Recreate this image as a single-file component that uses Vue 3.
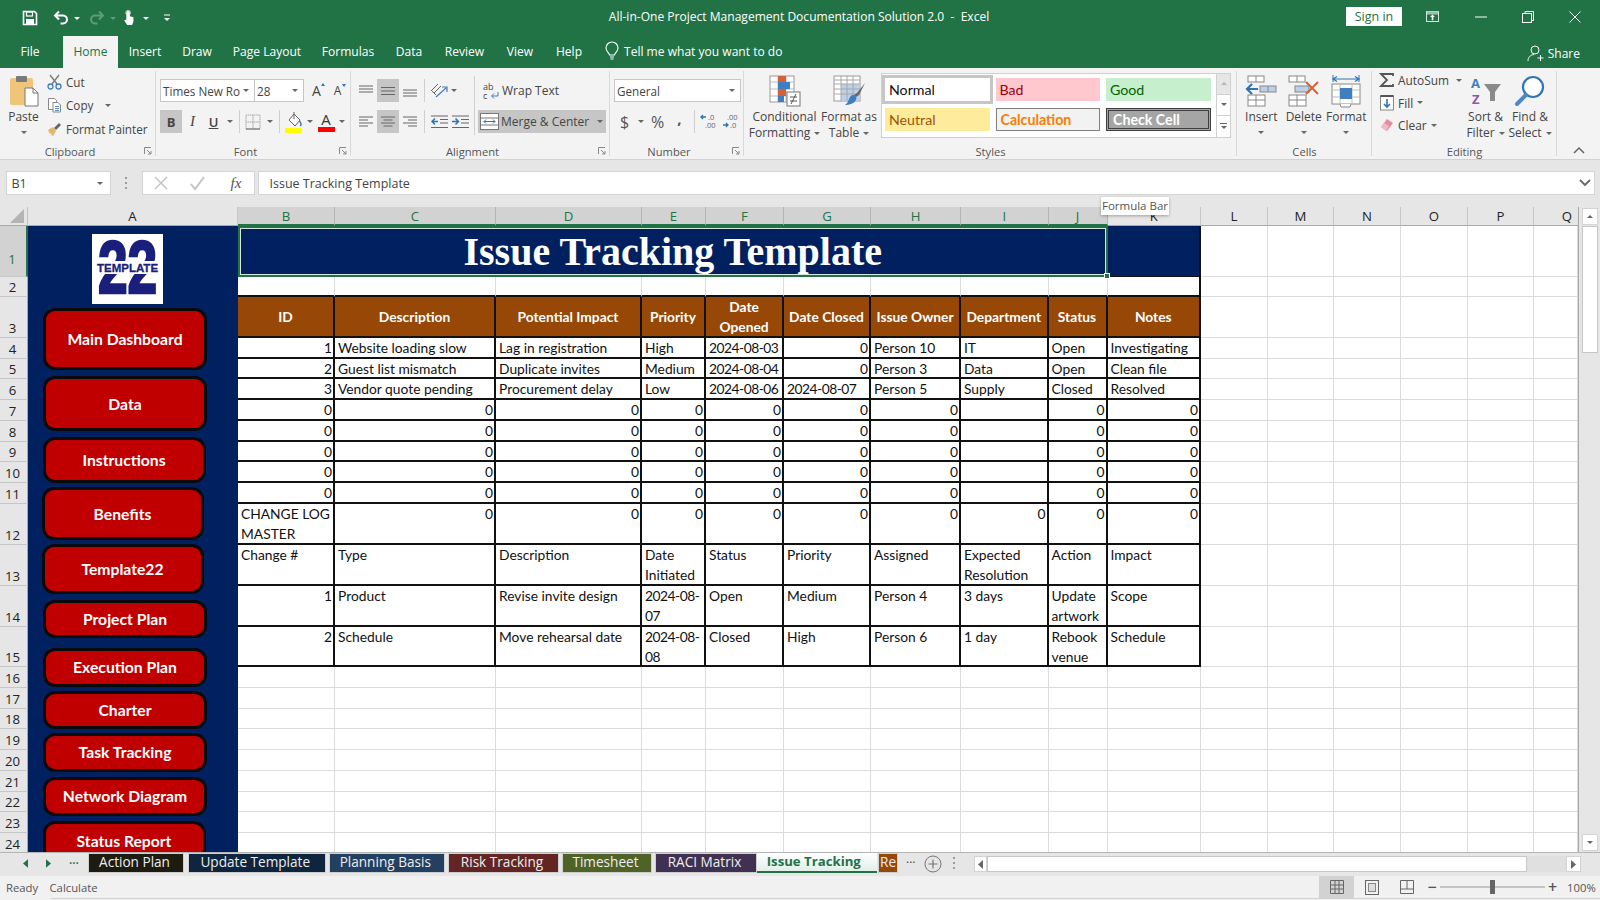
<script setup>
const ribbonTabs = ['File','Home','Insert','Draw','Page Layout','Formulas','Data','Review','View','Help']
const letters = 'ABCDEFGHIJKLMNOPQ'.split('')
const selected = 'BCDEFGHIJ'

const nav = [
  { t:'Main Dashboard', x:15, top:4, w:164, h:62 },
  { t:'Data', x:15, top:6, w:164, h:55 },
  { t:'Instructions', x:14.5, top:6, w:163, h:46 },
  { t:'Benefits', x:13.5, top:4, w:162, h:53 },
  { t:'Template22', x:13.5, top:4, w:162, h:50 },
  { t:'Project Plan', x:15, top:5.5, w:164, h:38.5 },
  { t:'Execution Plan', x:15, top:9.5, w:164, h:39 },
  { t:'Charter', x:15, top:4, w:164, h:38.5 },
  { t:'Task Tracking', x:15, top:4, w:164, h:38.5 },
  { t:'Network Diagram', x:15, top:5, w:164, h:39 },
  { t:'Status Report', x:14.5, top:5, w:163, h:40 }
]

const sheetTabs = [
  { t:'Action Plan', w:96, gap:0, bg:'#1e1b10' },
  { t:'Update Template', w:137.5, gap:4, bg:'#0f243e' },
  { t:'Planning Basis', w:116.5, gap:3, bg:'#244061' },
  { t:'Risk Tracking', w:111, gap:3, bg:'#632523' },
  { t:'Timesheet', w:90, gap:3, bg:'#4f6228' },
  { t:'RACI Matrix', w:102, gap:3, bg:'#403152' }
]

const table = [
  [1,'Website loading slow','Lag in registration','High','2024-08-03',0,'Person 10','IT','Open','Investigating'],
  [2,'Guest list mismatch','Duplicate invites','Medium','2024-08-04',0,'Person 3','Data','Open','Clean file'],
  [3,'Vendor quote pending','Procurement delay','Low','2024-08-06','2024-08-07','Person 5','Supply','Closed','Resolved'],
  [0,0,0,0,0,0,0,'',0,0],
  [0,0,0,0,0,0,0,'',0,0],
  [0,0,0,0,0,0,0,'',0,0],
  [0,0,0,0,0,0,0,'',0,0],
  [0,0,0,0,0,0,0,'',0,0],
  ['CHANGE LOG\nMASTER',0,0,0,0,0,0,0,0,0],
  ['Change #','Type','Description','Date\nInitiated','Status','Priority','Assigned','Expected\nResolution','Action','Impact'],
  [1,'Product','Revise invite design','2024-08-\n07','Open','Medium','Person 4','3 days','Update\nartwork','Scope'],
  [2,'Schedule','Move rehearsal date','2024-08-\n08','Closed','High','Person 6','1 day','Rebook\nvenue','Schedule']
]
const heads = ['ID','Description','Potential Impact','Priority','Date\nOpened','Date Closed','Issue Owner','Department','Status','Notes']

const blanks = n => Array.from({ length: n }, () => ({ text:'', cls:'g' }))
const cellClass = v => {
  if (typeof v === 'number') return 't num'
  return v.startsWith('2024') ? 't date' : 't'
}
const rows = []
rows.push({ n:1, cells:[{ text:'Issue Tracking Template', cls:'title' }, { text:'', cls:'navy' }, ...blanks(6)] })
rows.push({ n:2, cells:[...Array.from({ length:10 }, (_, i) => ({ text:'', cls: i === 9 ? 'g above edge' : 'g above' })), ...blanks(6)] })
rows.push({ n:3, cells:[...heads.map(text => ({ text, cls:'hd' })), ...blanks(6)] })
table.forEach((r, i) => {
  rows.push({ n:i + 4, cells:[...r.map(v => ({ text:String(v), cls:cellClass(v) })), ...blanks(6)] })
})
for (let n = 16; n <= 24; n++) rows.push({ n, cells:blanks(16) })

const navStyle = b => ({ marginTop:b.top + 'px', marginLeft:b.x + 'px', width:b.w + 'px', height:b.h + 'px' })
const tabStyle = s => ({ width:s.w + 'px', marginLeft:s.gap + 'px', background:s.bg })
</script>

<template>
  <div class="app">
    <!-- title bar -->
    <header class="titlebar">
      <div class="qat">
        <svg class="qi" viewBox="0 0 16 16"><path d="M1.5 1.5h11l2 2v11h-13z" fill="none" stroke="#fff" stroke-width="1.6"/><rect x="4.5" y="2" width="6" height="4" fill="none" stroke="#fff" stroke-width="1.2"/><rect x="4" y="9" width="8" height="5.5" fill="#fff"/></svg>
        <svg class="qi g15" viewBox="0 0 16 16"><path d="M6 1.5 2 5.5l4 4M2.5 5.5H10a4 4 0 0 1 0 8H7.5" fill="none" stroke="#fff" stroke-width="2"/></svg>
        <i class="car w qc"></i>
        <svg class="qi g4" viewBox="0 0 16 16"><path d="M10 1.5l4 4-4 4M13.5 5.5H6a4 4 0 0 0 0 8h2.5" fill="none" stroke="#5e9c7c" stroke-width="2"/></svg>
        <i class="car dim qc"></i>
        <svg class="qi" viewBox="0 0 16 18"><path d="M5 8V3a2 2 0 0 1 4 0v4l4 1.2V13l-1.5 4H6L2.5 11.5 5 11z" fill="#fff"/><circle cx="7" cy="3" r="2.6" fill="none" stroke="#fff" stroke-width=".8"/></svg>
        <i class="car w qc m1"></i>
        <svg class="qi g5" viewBox="0 0 16 16"><path d="M5 5h6" stroke="#fff" stroke-width="1"/><path d="M5 8h6l-3 3z" fill="#fff"/></svg>
      </div>
      <div class="doc-title">All-in-One Project Management Documentation Solution 2.0&nbsp; -&nbsp; Excel</div>
      <div class="winctl">
        <span class="signin">Sign in</span>
        <svg class="wi-ribbon" width="13" height="12" viewBox="0 0 16 14"><rect x=".5" y=".5" width="15" height="12" fill="none" stroke="#fff"/><path d="M1 1h14v3H1z" fill="#fff" opacity=".55"/><path d="M8 4l-3 3h2v4h2V7h2z" fill="#fff"/></svg>
        <svg class="wi wi-min" width="12" height="12" viewBox="0 0 12 12"><path d="M0 6h12" stroke="#fff"/></svg>
        <svg class="wi" width="12" height="12" viewBox="0 0 12 12"><rect x=".5" y="2.5" width="9" height="9" fill="none" stroke="#fff"/><path d="M3 2.5V.5h8.500v9h-2" fill="none" stroke="#fff"/></svg>
        <svg class="wi" width="12" height="12" viewBox="0 0 12 12"><path d="M.5.5l11 11M11.500.5l-11 11" stroke="#fff"/></svg>
      </div>
    </header>
    <nav class="tabsrow">
      <div class="rtabs">
        <span v-for="t in ribbonTabs" :key="t" class="rtab" :class="{ on: t === 'Home' }">{{ t }}</span>
      </div>
      <div class="tell">
        <svg width="14" height="18" viewBox="0 0 14 18"><path d="M4.500 13C4 10.500 1 9.500 1 6a6 6 0 0 1 12 0c0 3.500-3 4.500-3.500 7zM5 15h4M5.500 17h3" fill="none" stroke="#fff" stroke-width="1.100"/></svg>
        <span>Tell me what you want to do</span>
      </div>
      <div class="share">
        <svg width="18" height="17" viewBox="0 0 18 17"><circle cx="8" cy="5" r="4" fill="none" stroke="#fff"/><path d="M1 16c0-4 2.500-6 6-6.500M13.500 10v6M10.500 13h6" fill="none" stroke="#fff"/></svg>
        <span>Share</span>
      </div>
    </nav>

    <!-- ribbon -->
    <section class="ribbon">
      <div class="group g-clip">
        <div class="gbody clip">
          <div class="big paste">
            <svg class="bigic" width="30" height="32" viewBox="0 0 30 32"><rect x="1" y="3" width="23" height="27" rx="2" fill="#efc57a"/><rect x="7" y="1" width="11" height="6" rx="1" fill="#7a7a7a"/><path d="M16 13h8l5 5v13H16z" fill="#fff" stroke="#777"/><path d="M24 13v5h5" fill="none" stroke="#777"/></svg>
            <span class="bt">Paste</span>
            <i class="car"></i>
          </div>
          <div class="clipcol">
            <div class="cr"><svg width="15" height="16" viewBox="0 0 15 16"><path d="M3 1l7 9M12 1L5 10" stroke="#777" stroke-width="1.300"/><circle cx="3.500" cy="12.500" r="2.500" fill="none" stroke="#3f7fc0" stroke-width="1.300"/><circle cx="11.500" cy="12.500" r="2.500" fill="none" stroke="#3f7fc0" stroke-width="1.300"/></svg><span>Cut</span></div>
            <div class="cr"><svg width="15" height="16" viewBox="0 0 15 16"><path d="M1.500 1.500h6l2 2v9h-8z" fill="#fff" stroke="#888"/><path d="M6 5.500h5l2.500 2.500v7H6z" fill="#fff" stroke="#888"/><path d="M8 9.500h4M8 11.500h4M8 13.500h4" stroke="#5a8dc4"/></svg><span>Copy</span><i class="car cm"></i></div>
            <div class="cr"><svg width="15" height="16" viewBox="0 0 15 16"><path d="M1 9l5-3 3 4-3 5-2-1 1-2-2 1z" fill="#e7b567"/><path d="M7 7l5-5 2 2-5 5z" fill="#666"/></svg><span>Format Painter</span></div>
          </div>
        </div>
        <div class="glabel"><span>Clipboard</span><svg class="launch" width="8" height="8" viewBox="0 0 8 8"><path d="M.5 7V.5H7M3 3l4 4M7 4v3H4" fill="none" stroke="#888"/></svg></div>
      </div>

      <div class="group g-font">
        <div class="gbody rowsg">
          <div class="frow1">
            <div class="combo fname"><span>Times New Ro</span><i class="car"></i></div>
            <div class="combo fsize"><span>28</span><i class="car"></i></div>
            <span class="growa">A<sup class="up"></sup></span>
            <span class="growa sm">A<sup class="dn"></sup></span>
          </div>
          <div class="frow2">
            <span class="tb hl fmt b">B</span>
            <span class="tb fmt i">I</span>
            <span class="tb fmt u">U</span>
            <span class="tb"><i class="car"></i></span>
            <span class="tb"><i class="vs"></i></span>
            <span class="tb"><svg width="16" height="16" viewBox="0 0 16 16"><path d="M1 1h14v14H1zM8 1v14M1 8h14" fill="none" stroke="#aaa" stroke-dasharray="1.500 .5"/><path d="M1 15h14" stroke="#666"/></svg></span>
            <span class="tb"><i class="car"></i></span>
            <span class="tb"><i class="vs"></i></span>
            <span class="tb"><svg width="18" height="22" viewBox="0 0 18 22"><path d="M4 9l5-6 6 6-5 6z" fill="#fff" stroke="#666"/><path d="M9 1v7" stroke="#666"/><path d="M14.500 10c2 2.500 2 4 .5 5" fill="none" stroke="#3f7fc0" stroke-width="1.500"/><rect x="0" y="17" width="17" height="5" fill="#ffff00"/></svg></span>
            <span class="tb"><i class="car"></i></span>
            <span class="tb colora"><span class="ca">A</span><i class="cb"></i></span>
            <span class="tb"><i class="car"></i></span>
          </div>
        </div>
        <div class="glabel"><span>Font</span><svg class="launch" width="8" height="8" viewBox="0 0 8 8"><path d="M.5 7V.5H7M3 3l4 4M7 4v3H4" fill="none" stroke="#888"/></svg></div>
      </div>

      <div class="group g-align">
        <div class="gbody algrid">
          <span class="tb"><svg width="16" height="12" viewBox="0 0 16 12"><path d="M1 1h14M1 4h14M1 7h14" stroke="#666" fill="none"/></svg></span>
          <span class="tb hl"><svg width="16" height="12" viewBox="0 0 16 12"><path d="M1 2.500h14M1 6h14M1 9.500h14" stroke="#666" fill="none"/></svg></span>
          <span class="tb"><svg width="16" height="12" viewBox="0 0 16 12"><path d="M1 5h14M1 8h14M1 11h14" stroke="#666" fill="none"/></svg></span>
          <span class="tb vsp"><i class="vs"></i></span>
          <span class="tb"><svg width="20" height="18" viewBox="0 0 20 18"><path d="M3 8l6-6M5 11l7-7M2 8l5 5" stroke="#666" fill="none"/><path d="M7 15l10-9M13 5h5v5" stroke="#3f7fc0" fill="none" stroke-width="1.200"/></svg></span>
          <span class="tb left"><i class="car"></i></span>
          <span class="msep"><i></i></span>
          <span class="wl"><svg width="18" height="18" viewBox="0 0 18 18"><text x="1" y="8" class="abc">ab</text><text x="1" y="17" class="abc">c</text><path d="M16 10v4h-6M12 11.500 9.500 14l2.500 2.500" fill="none" stroke="#3f7fc0"/></svg><span>Wrap Text</span></span>

          <span class="tb"><svg width="14" height="12" viewBox="0 0 14 12"><path d="M0 1h14M0 4h9M0 7h14M0 10h9" stroke="#666"/></svg></span>
          <span class="tb hl"><svg width="14" height="12" viewBox="0 0 14 12"><path d="M0 1h14M2.500 4h9M0 7h14M2.500 10h9" stroke="#666"/></svg></span>
          <span class="tb"><svg width="14" height="12" viewBox="0 0 14 12"><path d="M0 1h14M5 4h9M0 7h14M5 10h9" stroke="#666"/></svg></span>
          <span class="tb vsp2"></span>
          <span class="tb"><svg width="17" height="14" viewBox="0 0 17 14"><path d="M0 1h17M9 4.500h8M9 8h8M0 12.500h17" stroke="#666"/><path d="M7 6.500H1M4 3.500l-3 3 3 3" fill="none" stroke="#2f75b5" stroke-width="1.500"/></svg></span>
          <span class="tb"><svg width="17" height="14" viewBox="0 0 17 14"><path d="M0 1h17M9 4.500h8M9 8h8M0 12.500h17" stroke="#666"/><path d="M0 6.500h6M3.500 3.500l3 3-3 3" fill="none" stroke="#2f75b5" stroke-width="1.500"/></svg></span>
          <span class="ml hl"><svg width="19" height="17" viewBox="0 0 19 17"><rect x=".5" y=".5" width="18" height="16" fill="#fff" stroke="#777"/><path d="M.5 5h18M.5 12h18" stroke="#777"/><path d="M4 8.500h11M6 6.500l-2 2 2 2M13 6.500l2 2-2 2" fill="none" stroke="#2f75b5"/></svg><span>Merge &amp; Center</span><i class="car"></i></span>
        </div>
        <div class="glabel"><span>Alignment</span><svg class="launch" width="8" height="8" viewBox="0 0 8 8"><path d="M.5 7V.5H7M3 3l4 4M7 4v3H4" fill="none" stroke="#888"/></svg></div>
      </div>

      <div class="group g-num">
        <div class="gbody rowsg">
          <div class="combo fgen"><span>General</span><i class="car"></i></div>
          <div class="nrow2">
            <span class="tb sym">$</span>
            <span class="tb"><i class="car"></i></span>
            <span class="tb sym">%</span>
            <span class="tb comma">,</span>
            <span class="tb"><i class="vs"></i></span>
            <span class="tb"><svg width="19" height="17" viewBox="0 0 19 17"><path d="M1 4h5M3 2 1 4l2 2" fill="none" stroke="#2f75b5" stroke-width="1.300"/><text x="8" y="7" class="dec">.0</text><text x="5" y="15" class="dec">.00</text></svg></span>
            <span class="tb"><svg width="19" height="17" viewBox="0 0 19 17"><text x="5" y="7" class="dec">.00</text><path d="M1 12h5M4 10l2 2-2 2" fill="none" stroke="#2f75b5" stroke-width="1.300"/><text x="8" y="15" class="dec">.0</text></svg></span>
          </div>
        </div>
        <div class="glabel"><span>Number</span><svg class="launch" width="8" height="8" viewBox="0 0 8 8"><path d="M.5 7V.5H7M3 3l4 4M7 4v3H4" fill="none" stroke="#888"/></svg></div>
      </div>

      <div class="group g-styles">
        <div class="gbody stylesb">
          <div class="big cf">
            <svg class="bigic" width="32" height="32" viewBox="0 0 32 32"><rect x="1" y="1" width="24" height="26" fill="#fff" stroke="#999"/><path d="M1 7h24M1 14h24M1 21h24M9 1v26M17 1v26" stroke="#bbb"/><rect x="9" y="1" width="8" height="6" fill="#d2603a"/><rect x="9" y="7" width="12" height="7" fill="#3f7fc0"/><rect x="9" y="14" width="8" height="7" fill="#d2603a"/><rect x="9" y="21" width="6" height="6" fill="#3f7fc0"/><rect x="18" y="17" width="13" height="14" fill="#fff" stroke="#777"/><path d="M21 22h7M21 26h7M22 29l5-10" stroke="#555"/></svg>
            <span class="bt">Conditional</span>
            <span class="bt">Formatting<i class="car cm2"></i></span>
          </div>
          <div class="big ft">
            <svg class="bigic" width="32" height="32" viewBox="0 0 32 32"><rect x="1" y="1" width="26" height="25" fill="#fff" stroke="#999"/><rect x="8" y="9" width="18" height="17" fill="#bcd0e8"/><path d="M1 5h26M1 9h26M1 14h26M1 19h26M8 1v25M14 1v25M20 1v25" stroke="#a8a8a8"/><path d="M32 8 24 18l-3 2 2 2 3-2z" fill="#666"/><path d="M20 20c3 0 4 2 3 5s-7 5-11 5c3-2 3-4 4-6s2-4 4-4z" fill="#3f7fc0"/></svg>
            <span class="bt">Format as</span>
            <span class="bt">Table<i class="car cm2"></i></span>
          </div>
          <div class="gallery">
            <div class="st normal">Normal</div>
            <div class="st bad">Bad</div>
            <div class="st good">Good</div>
            <div class="st neutral">Neutral</div>
            <div class="st calc">Calculation</div>
            <div class="st check">Check Cell</div>
          </div>
          <div class="gscroll">
            <span class="gs off"><i class="car upc"></i></span>
            <span class="gs"><i class="car"></i></span>
            <span class="gs"><i class="bar"></i><i class="car"></i></span>
          </div>
        </div>
        <div class="glabel nolaunch"><span>Styles</span></div>
      </div>

      <div class="group g-cells">
        <div class="gbody cellsb">
          <div class="big">
            <svg class="bigic" width="32" height="32" viewBox="0 0 32 32"><rect x="3" y="1" width="16" height="6" fill="#fff" stroke="#888"/><path d="M11 1v6" stroke="#888"/><rect x="3" y="20" width="17" height="11" fill="#fff" stroke="#888"/><path d="M11 20v11M3 25h17" stroke="#888"/><rect x="15" y="11" width="16" height="6" fill="#bcd0e8" stroke="#888"/><path d="M23 11v6" stroke="#888"/><path d="M13 14H2M7 9l-5 5 5 5" fill="none" stroke="#2f75b5" stroke-width="2.200"/></svg>
            <span class="bt">Insert</span><i class="car"></i>
          </div>
          <div class="big">
            <svg class="bigic" width="32" height="32" viewBox="0 0 32 32"><rect x="1" y="1" width="16" height="6" fill="#fff" stroke="#888"/><path d="M9 1v6" stroke="#888"/><rect x="1" y="20" width="17" height="11" fill="#fff" stroke="#888"/><path d="M9 20v11M1 25h17" stroke="#888"/><rect x="7" y="11" width="14" height="6" fill="#bcd0e8" stroke="#888"/><path d="M18 7l12 12M30 7 18 19" stroke="#d2603a" stroke-width="2"/></svg>
            <span class="bt">Delete</span><i class="car"></i>
          </div>
          <div class="big">
            <svg class="bigic" width="32" height="32" viewBox="0 0 32 32"><path d="M3 4h26M7 1.500 3 4l4 2.500M25 1.500 29 4l-4 2.500" fill="none" stroke="#2f75b5" stroke-width="1.200"/><path d="M3 0v7M29 0v7" stroke="#2f75b5"/><rect x="2" y="9" width="28" height="20" fill="#fff" stroke="#888"/><path d="M2 15h28M2 22h28M10 9v20M22 9v20" stroke="#bbb"/><rect x="10" y="13" width="12" height="11" fill="#3f7fc0"/><path d="M10 29l1 3h9l1-3" fill="#fff" stroke="#888"/></svg>
            <span class="bt">Format</span><i class="car"></i>
          </div>
        </div>
        <div class="glabel nolaunch"><span>Cells</span></div>
      </div>

      <div class="group g-edit">
        <div class="gbody editb">
          <div class="editcol">
            <div class="er"><svg width="14" height="14" viewBox="0 0 14 14"><path d="M13 3V1H1l6 6-6 6h12v-2" fill="none" stroke="#555" stroke-width="1.800"/></svg><span>AutoSum</span><i class="car cm3"></i></div>
            <div class="er"><svg width="14" height="16" viewBox="0 0 14 16"><rect x=".5" y="1" width="13" height="14" fill="#fff" stroke="#888"/><path d="M.5 1h13" stroke="#555" stroke-width="2"/><path d="M7 4v8M4 9l3 3 3-3" fill="none" stroke="#2f75b5" stroke-width="1.600"/></svg><span>Fill</span><i class="car cm4"></i></div>
            <div class="er"><svg width="14" height="14" viewBox="0 0 14 14"><path d="M7 1l6 4-6 8-6-4z" fill="#e88ba0"/><path d="M1 9l3-4 5 3-3 5z" fill="#f2b8c5"/></svg><span>Clear</span><i class="car cm4"></i></div>
          </div>
          <div class="big">
            <svg class="bigic" width="32" height="32" viewBox="0 0 32 32"><text x="1" y="13" class="az a">A</text><text x="2" y="29" class="az z">Z</text><path d="M14 9h17l-6 8v9h-5v-9z" fill="#8a8a8a"/></svg>
            <span class="bt">Sort &amp;</span>
            <span class="bt">Filter<i class="car cm2"></i></span>
          </div>
          <div class="big">
            <svg class="bigic" width="32" height="32" viewBox="0 0 32 32"><circle cx="19" cy="12" r="10" fill="#fff" stroke="#2f75b5" stroke-width="2.200"/><path d="M12 20 3 29" stroke="#4f86c6" stroke-width="4" stroke-linecap="round"/></svg>
            <span class="bt">Find &amp;</span>
            <span class="bt">Select<i class="car cm2"></i></span>
          </div>
        </div>
        <div class="glabel nolaunch"><span>Editing</span></div>
      </div>

      <div class="collapse"><svg width="12" height="8" viewBox="0 0 12 8"><path d="M1 7l5-5 5 5" fill="none" stroke="#666" stroke-width="1.500"/></svg></div>
    </section>

    <!-- formula bar -->
    <section class="fbar">
      <div class="namebox"><span>B1</span><i class="car"></i></div>
      <div class="fdots"><i></i><i></i><i></i></div>
      <div class="fbtns">
        <svg width="14" height="14" viewBox="0 0 14 14"><path d="M1 1l12 12M13 1 1 13" stroke="#c4c4c4" stroke-width="1.500"/></svg>
        <svg width="15" height="14" viewBox="0 0 15 14"><path d="M1 8l4 5 9-12" fill="none" stroke="#c4c4c4" stroke-width="2"/></svg>
        <span class="fx">fx</span>
      </div>
      <div class="finput"><span>Issue Tracking Template</span><svg width="12" height="8" viewBox="0 0 12 8"><path d="M1 1l5 5 5-5" fill="none" stroke="#666" stroke-width="1.800"/></svg></div>
    </section>

    <!-- sheet -->
    <section class="sheetwrap">
      <div class="sheet">
        <div class="corner"><svg width="14" height="14" viewBox="0 0 14 14"><path d="M14 0v14H0z" fill="#b4b4b4"/></svg></div>
        <div v-for="l in letters" :key="l" class="colh" :class="{ sel: selected.includes(l), q: l === 'Q' }">{{ l }}</div>

        <div class="sidebar">
          <div class="logo">
            <svg width="71" height="70" viewBox="0 0 71 70">
              <text x="6" y="59" class="l22" transform="scale(.72 1)" transform-origin="6 59">22</text>
              <rect x="0" y="27" width="71" height="13" fill="#fff"/>
              <text x="35.500" y="38" class="ltpl" text-anchor="middle">TEMPLATE</text>
            </svg>
          </div>
          <div v-for="b in nav" :key="b.t" class="navbtn" :style="navStyle(b)">{{ b.t }}</div>
        </div>

        <template v-for="r in rows" :key="r.n">
          <div class="rowh" :class="{ sel: r.n === 1 }">{{ r.n }}</div>
          <div v-for="(c, i) in r.cells" :key="i" class="cell" :class="c.cls">{{ c.text }}</div>
        </template>
      </div>
      <div class="vscroll">
        <span class="vbtn"><i class="car upc"></i></span>
        <span class="vthumb"></span>
        <span class="vbtn vdown"><i class="car"></i></span>
      </div>
      <div class="tooltip">Formula Bar</div>
    </section>

    <!-- sheet tabs -->
    <section class="tabbar">
      <div class="tabnav">
        <svg width="5" height="9" viewBox="0 0 6 10"><path d="M6 0v10L0 5z" fill="#217346"/></svg>
        <svg width="5" height="9" viewBox="0 0 6 10"><path d="M0 0v10l6-5z" fill="#217346"/></svg>
        <span>...</span>
      </div>
      <div class="tabs">
        <div v-for="s in sheetTabs" :key="s.t" class="stab" :style="tabStyle(s)">{{ s.t }}</div>
        <div class="stab active">Issue Tracking</div>
        <div class="stab retab">Re</div>
      </div>
      <span class="more">...</span>
      <svg class="addsheet" width="18" height="18" viewBox="0 0 18 18"><circle cx="9" cy="9" r="8" fill="none" stroke="#777"/><path d="M9 4.500v9M4.500 9h9" stroke="#777" stroke-width="1.200"/></svg>
      <div class="tdots"><i></i><i></i><i></i></div>
      <div class="hscroll">
        <span class="hbtn"><svg width="5" height="9" viewBox="0 0 5 9"><path d="M5 0v9L0 4.500z" fill="#666"/></svg></span>
        <span class="hthumb"></span>
        <span class="hbtn hright"><svg width="5" height="9" viewBox="0 0 5 9"><path d="M0 0v9l5-4.500z" fill="#666"/></svg></span>
      </div>
    </section>

    <!-- status bar -->
    <footer class="status">
      <span class="st-ready">Ready</span>
      <span class="st-calc">Calculate</span>
      <div class="views">
        <span class="vw on"><svg width="14" height="14" viewBox="0 0 14 14"><path d="M.5.5h13v13H.5zM.5 5h13M.5 9h13M5 .5v13M9 .5v13" fill="none" stroke="#666"/></svg></span>
        <span class="vw"><svg width="14" height="15" viewBox="0 0 14 15"><rect x=".5" y=".5" width="13" height="14" fill="none" stroke="#666"/><rect x="3.500" y="3.500" width="7" height="8" fill="#ddd" stroke="#888"/></svg></span>
        <span class="vw"><svg width="14" height="14" viewBox="0 0 14 14"><path d="M.5.5h13v13H.5zM.5 9h13M7 .5V9" fill="none" stroke="#666"/></svg></span>
        <span class="zm">−</span>
        <span class="slider"><i></i></span>
        <span class="zm zp">+</span>
        <span class="pct">100%</span>
      </div>
    </footer>
    <div class="strip"></div>
  </div>
</template>

<style>
html, body { margin: 0; background: #f1f1f1; }
</style>

<style scoped>
.app { width: 1600px; height: 900px; display: flex; flex-direction: column; overflow: hidden; font-family: "Open Sans", "Noto Sans", sans-serif; color: #444; font-size: 12px; position: relative; background: #f1f1f1; }
i { display: block; font-style: normal; }
svg { overflow: visible; flex: none; }
.car { width: 0; height: 0; flex: none; border-left: 3px solid transparent; border-right: 3px solid transparent; border-top: 3.500px solid #666; }
.car.w { border-top-color: #fff; }
.car.dim { border-top-color: #5e9c7c; }
.car.upc { border-top: 0; border-bottom: 3.500px solid #666; }

/* title bar */
.titlebar { height: 36px; background: #217346; display: grid; grid-template-columns: 1fr auto 1fr; align-items: center; color: #fff; flex: none; padding-right: 2px; box-sizing: border-box; }
.qat { display: flex; align-items: center; padding-left: 22px; }
.qi { width: 16px; height: 16px; flex: none; }
.qc { margin-left: 5px; margin-right: 5px; }
.g15 { margin-left: 15px; }
.g4 { margin-left: 4px; }
.g5 { margin-left: 5px; }
.m1 { margin-left: 6px; }
.doc-title { font-size: 12.050px; color: #fff; white-space: nowrap; padding-bottom: 4px; }
.winctl { display: flex; align-items: center; justify-content: flex-end; padding-bottom: 3px; padding-right: 17px; }
.signin { width: 56px; height: 19px; background: #fff; color: #217346; font-size: 12.500px; line-height: 19px; text-align: center; }
.wi-ribbon { margin-left: 24px; }
.wi { margin-left: 35px; }
.wi-min { margin-left: 36px; }

.tabsrow { height: 32px; background: #217346; display: flex; color: #fff; flex: none; align-items: stretch; }
.rtabs { display: grid; grid-template-columns: 44px 11px 55px 54px 50px 90px 72px 50px 61px 50px 48px; margin-left: 8px; }
.rtab { display: flex; align-items: center; justify-content: center; font-size: 12.050px; padding-bottom: 2px; white-space: nowrap; }
.rtab.on { grid-column: 3; background: #f3f3f3; color: #217346; }
.tell { display: flex; align-items: center; gap: 5px; margin-left: 12px; font-size: 12.050px; padding-bottom: 2px; }
.share { margin-left: auto; display: flex; align-items: center; gap: 3px; padding: 2px 20px 0 0; font-size: 12px; }

/* ribbon */
.ribbon { height: 92px; background: #f3f3f3; border-bottom: 1px solid #d2d2d2; box-sizing: border-box; display: flex; flex: none; }
.group { display: flex; flex-direction: column; box-sizing: border-box; position: relative; height: 91px; }
.group::after { content: ""; position: absolute; right: 0; top: 3px; bottom: 3px; width: 1px; background: #d9d9d9; }
.gbody { flex: 1; min-height: 0; }
.glabel { height: 16px; display: flex; align-items: center; font-size: 11.200px; color: #555; flex: none; }
.glabel span { flex: 1; text-align: center; }
.launch { width: 16px; flex: none; }
.g-clip { width: 156px; }
.g-font { width: 195px; }
.g-align { width: 259px; }
.g-num { width: 134px; }
.g-styles { width: 493px; }
.g-cells { width: 135px; }
.g-edit { width: 185px; }
.collapse { flex: 1; display: flex; align-items: flex-end; justify-content: center; padding-bottom: 5px; }

.big { display: flex; flex-direction: column; align-items: center; padding-top: 7px; box-sizing: border-box; }
.bigic { height: 32px; flex: none; margin-bottom: 2px; }
.bt { line-height: 16px; font-size: 12px; display: flex; align-items: center; white-space: nowrap; color: #444; }
.big > .car { margin-top: 6px; }
.cm2 { margin-left: 4px; }

.clip { display: flex; }
.paste { width: 47px; }
.clipcol { display: flex; flex-direction: column; padding-top: 2px; }
.cr { height: 23.500px; display: flex; align-items: center; gap: 4px; font-size: 11.700px; white-space: nowrap; }
.cm { margin-left: 8px; }

.rowsg { padding: 11px 0 0 4px; display: flex; flex-direction: column; gap: 8px; }
.frow1 { display: flex; align-items: center; height: 23px; }
.combo { height: 23px; box-sizing: border-box; background: #fff; border: 1px solid #c6c6c6; display: flex; align-items: center; justify-content: space-between; padding: 0 5px 0 2px; font-size: 11.700px; white-space: nowrap; flex: none; }
.fname { width: 95px; }
.fsize { width: 50px; margin-left: -1px; }
.fgen { width: 127px; }
.growa { font-size: 14px; width: 21px; text-align: center; position: relative; }
.growa:first-of-type { margin-left: 2px; }
.growa.sm { font-size: 12px; }
.up, .dn { position: absolute; right: 2px; top: 2px; width: 0; height: 0; border-left: 2px solid transparent; border-right: 2px solid transparent; }
.up { border-bottom: 3px solid #2f75b5; }
.dn { border-top: 3px solid #2f75b5; }
.tb { display: flex; align-items: center; justify-content: center; height: 23px; }
.tb.left { justify-content: flex-start; }
.hl { background: #c6c6c6; }
.vs { width: 1px; height: 23px; background: #cfcfcf; }
.frow2 { display: grid; grid-template-columns: 22px 21px 21px 11px 8px 20px 13px 6px 24px 8px 24px 8px; height: 23px; }
.fmt { font-family: "Liberation Serif", serif; font-size: 14px; color: #444; }
.fmt.b { font-family: "Open Sans", sans-serif; font-weight: 700; font-size: 13px; }
.fmt.i { font-style: italic; font-size: 15px; }
.fmt.u { font-family: "Open Sans", sans-serif; text-decoration: underline; font-weight: 600; font-size: 13px; }
.colora { flex-direction: column; }
.ca { font-size: 15px; line-height: 15px; color: #333; }
.cb { width: 17px; height: 5px; background: #f00; }

.algrid { display: grid; grid-template-columns: 22px 22px 22px 6px 24px 19px 8px 127.500px; grid-template-rows: 23px 23px; row-gap: 8px; padding: 11px 0 0 4px; }
.msep { grid-row: 1 / span 2; grid-column: 7; display: flex; align-items: flex-start; justify-content: center; }
.msep i { width: 1px; height: 59px; background: #cfcfcf; margin-top: -3px; }
.wl { display: flex; align-items: center; gap: 2px; padding-left: 4px; font-size: 12px; white-space: nowrap; }
.ml { display: flex; align-items: center; gap: 2px; padding-left: 2px; font-size: 12px; white-space: nowrap; }
.ml .car { margin-left: 6px; }
.vsp2::after { content: ""; width: 1px; height: 23px; background: #cfcfcf; }
.abc { font: 9px "Open Sans", sans-serif; fill: #444; }
.nrow2 { display: grid; grid-template-columns: 21px 12px 21px 23px 6px 24px 20px; height: 23px; }
.sym { font-size: 16px; color: #555; }
.comma { font-weight: 700; font-size: 15px; padding-bottom: 8px; box-sizing: border-box; color: #555; }
.dec { font: 7.500px "Open Sans", sans-serif; fill: #666; }

.stylesb { display: flex; padding-left: 8px; }
.cf { width: 65px; }
.ft { width: 64px; }
.gallery { width: 335px; height: 65px; box-sizing: border-box; margin-top: 4.500px; background: #fff; border: 1px solid #d0d0d0; border-right: 0; padding: 4px 0 0 3px; display: grid; grid-template-columns: 104.500px 104.500px 104.500px; grid-template-rows: 23.500px 23.500px; column-gap: 6px; row-gap: 6.500px; font-family: "Lato", sans-serif; font-size: 14.200px; }
.st { box-sizing: border-box; padding-left: 4px; display: flex; align-items: center; white-space: nowrap; }
.normal { background: #fff; color: #111; outline: 3px solid #c6c6c6; }
.bad { background: #ffc7ce; color: #9c0006; }
.good { background: #c6efce; color: #006100; }
.neutral { background: #ffeb9c; color: #9c5700; }
.calc { background: #f2f2f2; color: #fa7d00; font-weight: 700; border: 1px solid #7f7f7f; }
.check { background: #a5a5a5; color: #fff; font-weight: 700; border: 3px double #3f3f3f; }
.gscroll { width: 15px; margin-top: 4.500px; height: 65px; display: flex; flex-direction: column; border: 1px solid #d0d0d0; box-sizing: border-box; background: #fff; }
.gs { flex: 1; display: flex; flex-direction: column; gap: 2px; align-items: center; justify-content: center; border-bottom: 1px solid #d0d0d0; }
.gs:last-child { border-bottom: 0; }
.gs.off { background: #e6e6e6; }
.gs.off .car { border-bottom-color: #b5b5b5; }
.bar { width: 7px; height: 1px; background: #666; }

.cellsb { display: flex; padding-left: 3px; }
.cellsb .big { width: 42.500px; }
.editb { display: flex; padding-left: 8px; }
.editcol { width: 84px; display: flex; flex-direction: column; padding-top: 1px; }
.er { height: 22.500px; display: flex; align-items: center; gap: 4px; font-size: 11.900px; }
.editb .big:nth-child(2) { width: 43px; }
.editb .big:nth-child(3) { width: 46px; }
.cm3 { margin-left: 3px; }
.az { font: 700 13px "Open Sans", sans-serif; }
.az.a { fill: #3f7fc0; }
.az.z { fill: #8a56b8; }

/* formula bar */
.fbar { height: 47px; background: #e6e6e6; flex: none; box-sizing: border-box; padding: 11px 5px 0 5.500px; display: flex; align-items: flex-start; }
.namebox { width: 105px; height: 24px; box-sizing: border-box; background: #fff; border: 1px solid #d4d4d4; display: flex; align-items: center; justify-content: space-between; padding: 0 7px 0 5px; font-size: 12.500px; }
.fdots { width: 31px; height: 24px; display: flex; flex-direction: column; gap: 3px; align-items: center; justify-content: center; }
.fdots i { width: 2px; height: 2px; background: #999; }
.fbtns { width: 113px; height: 24px; box-sizing: border-box; background: #fff; border: 1px solid #d4d4d4; display: grid; grid-template-columns: 36px 38px 39px; align-items: center; justify-items: center; }
.fx { font: italic 15px "Liberation Serif", serif; color: #555; }
.finput { flex: 1; height: 24px; box-sizing: border-box; margin-left: 3px; background: #fff; border: 1px solid #d4d4d4; display: flex; align-items: center; justify-content: space-between; padding: 0 3px 0 11px; font-size: 12.500px; }

/* sheet */
.sheetwrap { height: 645px; flex: none; display: flex; background: #e6e6e6; position: relative; }
.sheet { width: 1578px; height: 645px; overflow: hidden; display: grid; background: #fff; grid-template-columns: 28px 210px 97px 161px 146px 64px 78px 87px 90px 87.500px 59px 93.500px 67px 66px 67px 67px 66px 44px; grid-template-rows: 19px 51px 20px 41px 20.500px 20.500px 21px 21px 21px 20px 21px 21px 41px 41px 40.500px 40.500px 20.500px 21px 20px 21px 21px 21px 20px 21px 21px; }
.corner { background: #e6e6e6; display: flex; align-items: flex-end; justify-content: flex-end; padding: 0 3px 2px 0; box-sizing: border-box; border-right: 1px solid #c0c0c0; border-bottom: 1px solid #a8a8a8; }
.colh { background: #e6e6e6; font-size: 13.200px; color: #222; display: flex; align-items: center; justify-content: center; box-sizing: border-box; border-right: 1px solid #c6c6c6; border-bottom: 1px solid #a8a8a8; }
.colh.q { padding-left: 22px; border-right: 0; }
.colh.sel { background: #d2d2d2; color: #217346; border-bottom: 2px solid #217346; border-right-color: #b5b5b5; }
.rowh { background: #e6e6e6; font-size: 13.200px; color: #222; display: flex; align-items: flex-end; justify-content: center; box-sizing: border-box; border-bottom: 1px solid #c6c6c6; border-right: 1px solid #a8a8a8; line-height: 18px; padding-right: 2px; }
.rowh.sel { background: #d2d2d2; color: #217346; border-right: 2px solid #217346; padding-bottom: 8px; }

.sidebar { grid-column: 2; grid-row: 2 / -1; background: #002060; overflow: hidden; display: flex; flex-direction: column; align-items: flex-start; min-height: 0; }
.logo { margin: 8px 0 0 64px; width: 71px; height: 70px; background: #fff; flex: none; }
.l22 { font: 700 74px "Liberation Sans", sans-serif; fill: #1a1f7c; stroke: #1a1f7c; stroke-width: 2.500px; }
.ltpl { font: 900 11.500px "Liberation Sans", sans-serif; fill: #1a1f7c; stroke: #1a1f7c; stroke-width: .3px; }
.navbtn { flex: none; box-sizing: border-box; background: #c00000; border: 3px solid #0a0a0a; border-radius: 12px; color: #fff; font-family: "Lato", sans-serif; font-weight: 700; font-size: 15.700px; display: flex; align-items: center; justify-content: center; white-space: nowrap; }

.cell { box-sizing: border-box; min-width: 0; font-family: "Lato", sans-serif; font-size: 13.800px; line-height: 20px; color: #111; white-space: pre; overflow: hidden; }
.g { border-right: 1px solid #dcdcdc; border-bottom: 1px solid #dcdcdc; }
.g.above { border-bottom: 2px solid #111; }
.g.edge { border-right: 2px solid #111; }
.title { grid-column: span 9; background: #002060; color: #fff; font-family: "Liberation Serif", serif; font-weight: 700; font-size: 40px; line-height: 1; display: flex; align-items: center; justify-content: center; border: 2px solid #217346; box-shadow: inset 0 0 0 1px #d9e6df; position: relative; overflow: visible; z-index: 2; }
.title::after { content: ""; position: absolute; right: -4px; bottom: -4px; width: 6px; height: 6px; background: #217346; border: 1px solid #fff; box-sizing: border-box; }
.navy { background: #002060; border-right: 2px solid #111; border-bottom: 1px solid #111; }
.hd { background: #974706; color: #fff; font-weight: 700; display: flex; align-items: center; justify-content: center; text-align: center; border-right: 2px solid #111; border-bottom: 2px solid #111; }
.t { padding: 0 3px; border-right: 2px solid #111; border-bottom: 2px solid #111; }
.num { text-align: right; padding-right: 1px; }
.date { letter-spacing: -.5px; }

.vscroll { flex: 1; display: flex; flex-direction: column; align-items: center; padding: 1px 0 0; box-sizing: border-box; border-left: 1px solid #a8a8a8; }
.vbtn { width: 16px; height: 17px; background: #fff; border: 1px solid #d4d4d4; box-sizing: border-box; display: flex; align-items: center; justify-content: center; flex: none; }
.vthumb { width: 16px; height: 127px; background: #fff; border: 1px solid #c6c6c6; box-sizing: border-box; margin-top: 1px; flex: none; }
.vdown { margin-top: auto; margin-bottom: 1px; }
.tooltip { position: absolute; left: 1101px; top: -10px; width: 68px; height: 18px; background: #fff; box-sizing: border-box; box-shadow: 0 1px 3px rgba(0,0,0,.3); color: #555; font-size: 11.500px; line-height: 18px; text-align: center; white-space: nowrap; z-index: 5; }

/* tab bar */
.tabbar { height: 24px; background: #e6e6e6; flex: none; border-top: 1px solid #b5b5b5; box-sizing: border-box; display: flex; align-items: flex-start; }
.tabnav { width: 88px; height: 20px; padding-left: 23px; box-sizing: border-box; display: flex; align-items: center; gap: 18px; color: #217346; font-size: 12px; line-height: 12px; flex: none; }
.tabnav span { margin-left: 0; padding-bottom: 6px; font-weight: 600; }
.tabs { display: flex; height: 20px; flex: none; width: 810px; overflow: hidden; }
.stab { flex: none; height: 20px; box-sizing: border-box; text-align: center; color: #eee; font-size: 13.600px; line-height: 15.500px; white-space: nowrap; border: 1px solid #d0d0d0; overflow: hidden; padding-right: 3px; }
.stab.active { width: 119.500px; background: linear-gradient(#fff, #e2eeea); color: #217346; font-weight: 700; border: 0; border-bottom: 2px solid #217346; font-size: 13.200px; line-height: 16px; padding-right: 6px; }
.stab.retab { width: 20px; background: #974706; margin-left: 1.500px; text-align: left; padding: 0 0 0 1px; }
.more { width: 24px; font-size: 12px; color: #444; flex: none; line-height: 12px; padding: 0 0 0 8px; box-sizing: border-box; }
.addsheet { margin: 2px 0 0 2px; flex: none; }
.tdots { width: 24px; height: 20px; display: flex; flex-direction: column; gap: 3px; align-items: center; justify-content: center; flex: none; }
.tdots i { width: 2px; height: 2px; background: #999; }
.hscroll { flex: none; width: 607.500px; margin-left: 7.500px; height: 16px; margin-top: 3px; display: flex; background: #e0e0e0; }
.hbtn { width: 13px; height: 16px; background: #fff; border: 1px solid #d4d4d4; box-sizing: border-box; display: flex; align-items: center; justify-content: center; flex: none; }
.hthumb { width: 540px; height: 16px; background: #fff; border: 1px solid #c6c6c6; box-sizing: border-box; flex: none; }
.hright { margin-left: auto; width: 15px; }

/* status */
.status { height: 22px; background: #f1f1f1; display: flex; align-items: center; flex: none; font-size: 11.300px; color: #555; }
.st-ready { margin-left: 6px; width: 43.500px; }
.views { margin-left: auto; display: flex; align-items: center; height: 22px; }
.vw { width: 35px; height: 22px; display: flex; align-items: center; justify-content: center; }
.vw.on { background: #d2d2d2; }
.zm { width: 16px; text-align: center; font-size: 16px; color: #555; font-weight: 600; line-height: 16px; }
.zp { width: 15px; }
.slider { width: 105px; height: 14px; background: linear-gradient(#c4c4c4, #c4c4c4) center / 100% 2px no-repeat; display: flex; justify-content: center; }
.slider i { width: 5px; height: 14px; background: #666; }
.pct { width: 40px; padding-left: 7px; box-sizing: border-box; }
.strip { height: 2px; flex: none; margin-left: 51px; border-top: 1px solid #d0d0d0; box-sizing: border-box; }
</style>
